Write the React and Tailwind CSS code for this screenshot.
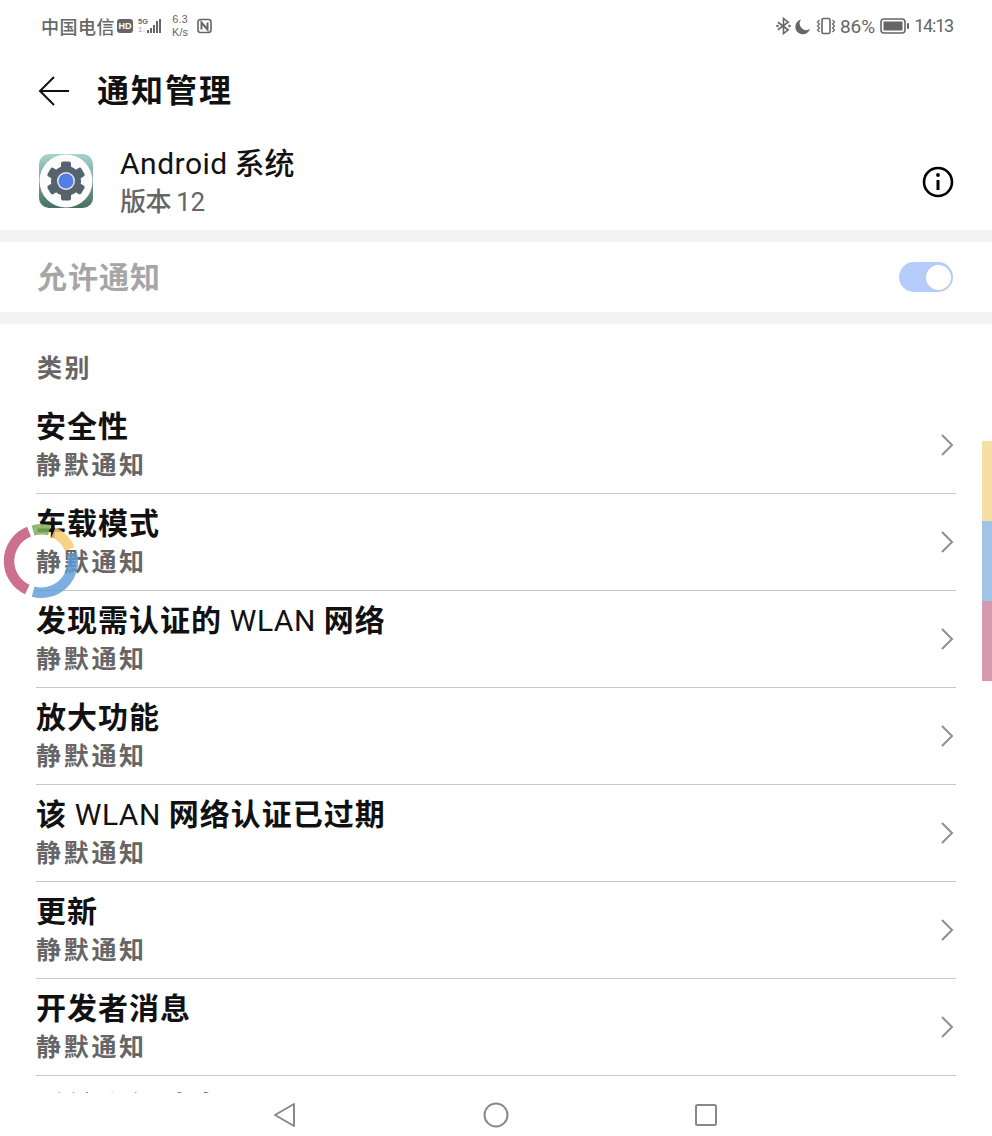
const CJK = "font-['Noto_Sans_CJK_SC','Noto_Sans',sans-serif]";

const rows = [
  ["安全性"],
  ["车载模式"],
  ["发现需认证的 ", "WLAN", " 网络"],
  ["放大功能"],
  ["该 ", "WLAN", " 网络认证已过期"],
  ["更新"],
  ["开发者消息"],
];

function Chevron() {
  return (
    <svg width="14" height="24" viewBox="0 0 14 24" fill="none" stroke="#8f8f8f" strokeWidth="2">
      <path d="M2 2 L12 12 L2 22" />
    </svg>
  );
}

function Row({ parts }) {
  return (
    <div className="flex h-[97px] items-center justify-between border-b border-[#c8c8c8] pr-[2px]">
      <div className="flex flex-col pb-[2px]">
        <div className="text-[30px] leading-[38px] font-bold tracking-[1px] text-[#111]">
          {parts[0]}
          {parts[1] && <span className="font-['Roboto',sans-serif] font-normal leading-none tracking-[0.5px]">{parts[1]}</span>}
          {parts[2]}
        </div>
        <div className="text-[25px] leading-[40px] font-bold tracking-[2.7px] text-[#666]">静默通知</div>
      </div>
      <Chevron />
    </div>
  );
}

function StatusBar() {
  return (
    <div className="flex h-[52px] items-center justify-between pl-[41px] pr-[39px] text-[#666]">
      <div className="flex items-center">
        <span className="text-[18px] leading-none font-medium tracking-[0.5px]">中国电信</span>
        <span className="ml-[2px] flex h-[14px] w-[16px] items-center justify-center rounded-[3px] bg-[#666] text-[9px] font-bold leading-none text-white font-['Liberation_Sans',sans-serif]">HD</span>
        <span className="ml-[5px] flex w-[10px] flex-col text-[7.5px] font-bold leading-[8px] font-['Liberation_Sans',sans-serif]">
          <span>5G</span>
          <span className="text-[#bbb]">1↓</span>
        </span>
        <svg width="14" height="16" viewBox="0 0 14 16" fill="#666" className="ml-[-1px]">
          <rect x="0" y="12" width="2" height="3" />
          <rect x="3" y="10" width="2" height="5" />
          <rect x="6" y="7" width="2" height="8" />
          <rect x="9" y="3" width="2" height="12" />
          <rect x="12" y="1" width="2" height="14" />
        </svg>
        <span className="ml-[10px] flex w-[18px] flex-col items-center text-[11px] leading-[13px] font-['Liberation_Sans',sans-serif]">
          <span>6.3</span>
          <span>K/s</span>
        </span>
        <svg width="16" height="16" viewBox="0 0 16 16" fill="none" stroke="#666" className="ml-[8px]">
          <rect x="1" y="1.5" width="13" height="13" rx="2.5" strokeWidth="1.6" />
          <path d="M4.5 11.5 V4.5 L10.5 11.5 V4.5" strokeWidth="2" />
        </svg>
      </div>
      <div className="flex items-center text-[18px] leading-none font-['Roboto',sans-serif]">
        <svg width="15" height="18" viewBox="0 0 16 18" fill="none" stroke="#666" strokeWidth="1.7">
          <path d="M2 5 L13 13 L8 17 V1 L13 5 L2 13" />
          <circle cx="1.6" cy="9" r="0.6" />
          <circle cx="14.4" cy="9" r="0.6" />
        </svg>
        <svg width="16" height="17" viewBox="0 0 17 17" fill="#666" className="ml-[4px]">
          <path d="M6.5 1 A8 8 0 1 0 16 11 A7 7 0 0 1 6.5 1 Z" />
        </svg>
        <svg width="20" height="18" viewBox="0 0 20 18" fill="none" stroke="#666" className="ml-[5px]">
          <rect x="6" y="1.5" width="8" height="15" rx="1.5" strokeWidth="1.6" />
          <path d="M3.5 3 L1.5 5 L3.5 7 L1.5 9 L3.5 11 L1.5 13 L3.5 15 M16.5 3 L18.5 5 L16.5 7 L18.5 9 L16.5 11 L18.5 13 L16.5 15" strokeWidth="1.2" />
        </svg>
        <span className="ml-[4px] text-[19px]">86%</span>
        <svg width="29" height="16" viewBox="0 0 29 16" className="ml-[5px]">
          <rect x="1" y="1" width="24" height="14" rx="3" fill="none" stroke="#666" strokeWidth="1.6" />
          <rect x="3.5" y="3.5" width="19" height="9" fill="#666" />
          <rect x="27" y="5" width="2" height="6" rx="1" fill="#666" />
        </svg>
        <span className="ml-[5px] tracking-[-1.2px]">14:13</span>
      </div>
    </div>
  );
}

function AppIcon() {
  return (
    <svg width="54" height="54" viewBox="0 0 54 54" className="mt-[2px]">
      <defs>
        <linearGradient id="bg" x1="0" y1="0" x2="0" y2="1">
          <stop offset="0" stopColor="#a6d4cc" />
          <stop offset="1" stopColor="#476f63" />
        </linearGradient>
      </defs>
      <rect width="54" height="54" rx="10" fill="url(#bg)" />
      <circle cx="27" cy="27" r="26.5" fill="#fcfcfc" />
      <g fill="#56636d">
        <circle cx="27" cy="27" r="15" />
        <rect x="22" y="7.5" width="10" height="39" rx="2" />
        <rect x="22" y="7.5" width="10" height="39" rx="2" transform="rotate(60 27 27)" />
        <rect x="22" y="7.5" width="10" height="39" rx="2" transform="rotate(120 27 27)" />
      </g>
      <circle cx="27" cy="27" r="9" fill="#e6e9f2" />
      <circle cx="27" cy="27" r="7.5" fill="#4f7ee6" />
    </svg>
  );
}

function Overlay() {
  return (
    <svg width="84" height="84" viewBox="0 0 84 84" fill="none" strokeWidth="10.5" className="absolute left-0 top-[520px]">
      <g transform="translate(0.5 -520)">
        <path d="M28.5 531.7 A31.5 31.5 0 0 0 26.8 589.6" stroke="#c9688a" strokeOpacity="0.95" />
        <path d="M32.6 591.6 A31.5 31.5 0 0 0 71.4 553.5" stroke="#5b9ad8" strokeOpacity="0.8" />
        <path d="M53 532.3 A31.5 31.5 0 0 1 69.3 549" stroke="#f3cd72" strokeOpacity="0.85" />
        <path d="M32.5 530.5 A31.5 31.5 0 0 1 49 530.2" stroke="#7fae5c" strokeOpacity="0.85" />
      </g>
    </svg>
  );
}

export default function App() {
  return (
    <div className={`relative flex h-[1136px] w-[992px] flex-col overflow-hidden bg-white ${CJK}`}>
      <StatusBar />
      <div className="min-h-0 flex-1 overflow-hidden">
        <div className="flex h-[78px] items-center pl-[38px]">
          <svg width="32" height="32" viewBox="0 0 32 32" fill="none" stroke="#111" strokeWidth="2">
            <path d="M16 2 L2 16 L16 30 M2 16 H31" />
          </svg>
          <h1 className="mb-[6px] ml-[27px] text-[32px] leading-none font-bold tracking-[2px] text-[#111]">通知管理</h1>
        </div>
        <div className="flex h-[100px] items-center justify-between pl-[39px] pr-[38px]">
          <div className="flex items-center">
            <AppIcon />
            <div className="ml-[27px] flex flex-col">
              <div className="text-[30px] leading-[40px] font-medium text-[#111]">
                <span className="font-['Roboto',sans-serif] font-normal leading-none tracking-[0.5px]">Android</span> 系统
              </div>
              <div className="text-[26px] leading-[38px] font-medium tracking-[-0.5px] text-[#666]">
                版本 <span className="font-['Roboto',sans-serif] font-normal leading-none">12</span>
              </div>
            </div>
          </div>
          <svg width="32" height="32" viewBox="0 0 32 32" fill="none" stroke="#000" strokeWidth="2.6" className="mt-[4px]">
            <circle cx="16" cy="16" r="14" />
            <path d="M16 14 V24" strokeWidth="3" />
            <circle cx="16" cy="9" r="1.9" fill="#000" stroke="none" />
          </svg>
        </div>
        <div className="h-[12px] bg-[#f3f3f3]" />
        <div className="flex h-[70px] items-center justify-between pl-[37px] pr-[39px]">
          <span className="mb-[4px] text-[30px] font-bold tracking-[1px] text-[#a6a6a6]">允许通知</span>
          <div className="flex h-[30px] w-[54px] items-center justify-end rounded-full bg-[#b5cbf9] pr-[2px]">
            <div className="h-[25px] w-[25px] rounded-full bg-white" />
          </div>
        </div>
        <div className="h-[12px] bg-[#f3f3f3]" />
        <div className="flex h-[73px] items-end pb-[13px] pl-[37px] text-[25px] font-bold leading-[36px] tracking-[2.5px] text-[#666]">
          类别
        </div>
        <div className="pl-[36px] pr-[36px]">
          {rows.map((p) => (
            <Row key={p.join("")} parts={p} />
          ))}
          <div className="pt-[10px] text-[30px] leading-[38px] font-bold tracking-[1px] text-[#111]">系统升级消息</div>
        </div>
      </div>
      <div className="flex h-[43px] shrink-0 items-start justify-between bg-white pl-[273px] pr-[274px] pt-[9px]">
        <svg width="24" height="26" viewBox="0 0 24 26" fill="none" stroke="#888" strokeWidth="2" strokeLinejoin="round">
          <path d="M21 2 V24 L2 13 Z" />
        </svg>
        <svg width="26" height="26" viewBox="0 0 26 26" fill="none" stroke="#888" strokeWidth="2">
          <circle cx="13" cy="13" r="11.5" />
        </svg>
        <svg width="24" height="26" viewBox="0 0 24 26" fill="none" stroke="#888" strokeWidth="2">
          <rect x="2" y="3" width="20" height="20" rx="1.5" />
        </svg>
      </div>
      <Overlay />
      <div className="absolute right-0 top-[441px] flex w-[10px] flex-col">
        <div className="h-[80px] bg-[#f6dfa4]" />
        <div className="h-[80px] bg-[#a0c3e6]" />
        <div className="h-[80px] bg-[#d698ae]" />
      </div>
    </div>
  );
}
